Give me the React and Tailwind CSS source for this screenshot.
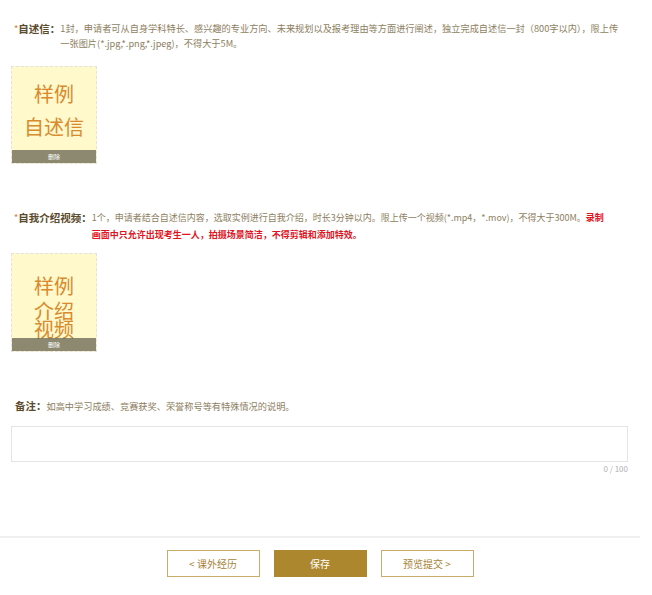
export default function App() {
    const font = { fontFamily: '"Microsoft YaHei", "Noto Sans CJK SC", "Noto Sans", sans-serif' };

    return (
        <div className="w-[652px] h-[595px] bg-white overflow-hidden" style={font}>
            <div className="w-[640px] pl-[11px] pr-[12px] pt-[21px]">
                {/* 自述信 */}
                <div className="flex text-[9.2px] leading-[15px] whitespace-nowrap">
                    <span className="pl-[3px] text-[#e0762e]">*</span>
                    <span className="font-bold text-[10.5px] text-[#5b4a2c]">自述信：</span>
                    <span className="text-[#8d7e60]">
                        1封，申请者可从自身学科特长、感兴趣的专业方向、未来规划以及报考理由等方面进行阐述，独立完成自述信一封（800字以内），限上传<br />
                        一张图片(*.jpg,*.png,*.jpeg)，不得大于5M。
                    </span>
                </div>
                <div className="mt-[15px] relative w-[86px] h-[98px] bg-[#fff9cc] border border-dashed border-[#e2e2e2] flex flex-col items-center text-[#d88a2c] text-[20px] leading-[33px]">
                    <span className="mt-[10px]">样例</span>
                    <span>自述信</span>
                    <div className="absolute left-0 right-0 bottom-0 h-[13px] bg-black/45 flex items-center justify-center text-[6px] text-white">删除</div>
                </div>

                {/* 自我介绍视频 */}
                <div className="mt-[45px] flex text-[9px] leading-[17px] whitespace-nowrap">
                    <span className="pl-[3px] text-[#e0762e]">*</span>
                    <span className="font-bold text-[10.5px] text-[#5b4a2c]">自我介绍视频：</span>
                    <span className="text-[#8d7e60]">
                        1个，申请者结合自述信内容，选取实例进行自我介绍，时长3分钟以内。限上传一个视频(*.mp4，*.mov)，不得大于300M。<b className="text-[#e0141e]">录制</b><br />
                        <b className="text-[#e0141e]">画面中只允许出现考生一人，拍摄场景简洁，不得剪辑和添加特效。</b>
                    </span>
                </div>
                <div className="mt-[10px] relative w-[86px] h-[99px] bg-[#fff9cc] border border-dashed border-[#e2e2e2] flex flex-col items-center text-[#d88a2c] text-[20px] leading-[20px]">
                    <span className="mt-[22px]">样例</span>
                    <span className="mt-[5px]">介绍</span>
                    <span className="mt-[-2px]">视频</span>
                    <div className="absolute left-0 right-0 bottom-0 h-[13px] bg-black/45 flex items-center justify-center text-[6px] text-white">删除</div>
                </div>

                {/* 备注 */}
                <div className="mt-[46px] flex items-baseline text-[9.2px] leading-[15px] pl-[4px]">
                    <span className="font-bold text-[10.5px] text-[#5b4a2c]">备注：</span>
                    <span className="text-[#8d7e60]">如高中学习成绩、竞赛获奖、荣誉称号等有特殊情况的说明。</span>
                </div>
                <div className="mt-[12px] h-[36px] border border-[#e4e4e4] bg-white"></div>
                <div className="mt-[1px] text-right text-[8px] leading-[12px] text-[#b0b0b0]">0 / 100</div>
            </div>

            <div className="mt-[61px] w-[640px] h-[2px] bg-[#efefef]"></div>

            <div className="w-[640px] mt-[12px] flex justify-center gap-[14px] text-[10px]">
                <button className="w-[93px] h-[27px] border border-[#c9ab6a] text-[#a8843a] bg-white">&lt; 课外经历</button>
                <button className="w-[93px] h-[27px] bg-[#ad872d] text-white">保存</button>
                <button className="w-[93px] h-[27px] border border-[#c9ab6a] text-[#a8843a] bg-white">预览提交 &gt;</button>
            </div>
        </div>
    );
}
